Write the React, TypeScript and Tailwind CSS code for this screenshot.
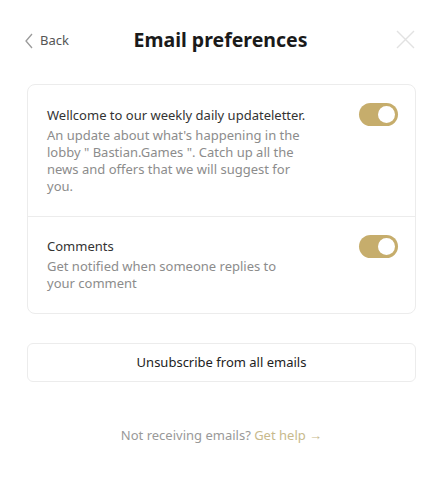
import React from "react";

function Toggle() {
  return (
    <div className="relative w-[39px] h-[23px] rounded-full bg-[#c6ad6c] shrink-0">
      <div className="absolute right-[3px] top-[3px] w-[17px] h-[17px] rounded-full bg-white" />
    </div>
  );
}

export default function App() {
  return (
    <div
      className="w-[435px] h-[478px] bg-white"
      style={{ fontFamily: '"Noto Sans", "Open Sans", sans-serif' }}
    >
      <div className="relative h-[80px] flex items-center">
        <div className="absolute left-[24px] top-[31px] flex items-center gap-[6px] text-[13px] text-[#555]">
          <svg width="10" height="16" viewBox="0 0 10 16" fill="none">
            <path d="M8 1 L2 8 L8 15" stroke="#9a9a9a" strokeWidth="1.3" />
          </svg>
          <span>Back</span>
        </div>
        <div className="absolute left-[6px] right-0 top-[25px] text-center text-[19.5px] font-bold text-[#1a1a1a]">
          Email preferences
        </div>
        <div className="absolute left-[396px] top-[30px]">
          <svg width="19" height="19" viewBox="0 0 19 19">
            <path d="M1 1 L18 18 M18 1 L1 18" stroke="#e2e2e2" strokeWidth="1.4" />
          </svg>
        </div>
      </div>
      <div className="px-[27px] pt-[4px]">
        <div className="border border-[#ececec] rounded-[8px] w-[389px]">
          <div className="flex justify-between px-[19px] pt-[22px] pb-[21px] border-b border-[#ececec]">
            <div className="w-[260px]">
              <div className="text-[13px] leading-[17px] text-[#333]">
                Wellcome to our weekly daily updateletter.
              </div>
              <div className="text-[13px] leading-[17px] text-[#8c8c8c] mt-[3px]">
                An update about what's happening in the lobby " Bastian.Games ". Catch up all the news and offers that we will suggest for you.
              </div>
            </div>
            <div className="-mt-[4px] mr-[-2px]">
              <Toggle />
            </div>
          </div>
          <div className="flex justify-between px-[19px] pt-[21px] pb-[21px]">
            <div className="w-[260px]">
              <div className="text-[13px] leading-[17px] text-[#333]">Comments</div>
              <div className="text-[13px] leading-[17px] text-[#8c8c8c] mt-[3px]">
                Get notified when someone replies to your comment
              </div>
            </div>
            <div className="-mt-[3px] mr-[-2px]">
              <Toggle />
            </div>
          </div>
        </div>
        <div className="mt-[29px] h-[39px] w-[389px] border border-[#ececec] rounded-[6px] flex items-center justify-center text-[13px] text-[#222]">
          Unsubscribe from all emails
        </div>
        <div className="mt-[44px] text-center text-[13px] text-[#999] w-[389px]">
          Not receiving emails? <span className="text-[#c8ba8c]">Get help →</span>
        </div>
      </div>
    </div>
  );
}
